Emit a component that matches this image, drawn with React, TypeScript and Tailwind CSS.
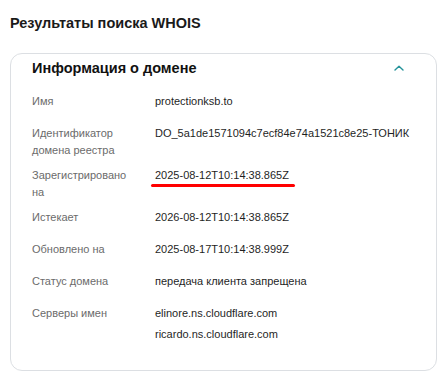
import React from "react";

type Row = {
  label: string;
  values: string[];
  marked?: boolean;
};

const rows: Row[] = [
  { label: "Имя", values: ["protectionksb.to"] },
  {
    label: "Идентификатор домена реестра",
    values: ["DO_5a1de1571094c7ecf84e74a1521c8e25-ТОНИК"],
  },
  { label: "Зарегистрировано на", values: ["2025-08-12T10:14:38.865Z"], marked: true },
  { label: "Истекает", values: ["2026-08-12T10:14:38.865Z"] },
  { label: "Обновлено на", values: ["2025-08-17T10:14:38.999Z"] },
  { label: "Статус домена", values: ["передача клиента запрещена"] },
  {
    label: "Серверы имен",
    values: ["elinore.ns.cloudflare.com", "ricardo.ns.cloudflare.com"],
  },
];

export default function App() {
  return (
    <div className="h-[374px] w-[444px] bg-white px-[10px] pt-[14px] font-['Liberation_Sans',Arial,sans-serif]">
      <h1 className="text-[14.5px] leading-[18px] font-bold text-[#1a1a1a]">
        Результаты поиска <span className="font-semibold">WHOIS</span>
      </h1>

      <div className="mt-[21px] h-[318px] w-[427px] rounded-[12px] border border-[#dcdfe3] px-[21px] pt-[4px]">
        <div className="flex h-[20px] items-center justify-between">
          <h2 className="text-[14.5px] leading-[20px] font-bold text-[#111]">
            Информация о домене
          </h2>
          <svg
            width="10"
            height="6"
            viewBox="0 0 10 6"
            fill="none"
            className="mr-[11px]"
          >
            <path
              d="M1 5L5 1.3L9 5"
              stroke="#24939a"
              strokeWidth="1.4"
              strokeLinecap="round"
              strokeLinejoin="round"
            />
          </svg>
        </div>

        <div className="mt-[15px] flex flex-col gap-[8px] text-[11px] leading-[17px]">
          {rows.map((row) => (
            <div key={row.label} className="flex min-h-[24px] items-start">
              <div className="w-[123px] shrink-0 pr-[24px] text-[#6b6b6b]">
                {row.label}
              </div>
              <div className="flex flex-col gap-[4px] text-[#1f1f1f]">
                {row.values.map((v) => (
                  <span key={v} className="relative">
                    {v}
                    {row.marked && (
                      <span className="absolute top-[17px] left-[-4px] h-[2.5px] w-[144px] rounded-full bg-[#ff0000]" />
                    )}
                  </span>
                ))}
              </div>
            </div>
          ))}
        </div>
      </div>
    </div>
  );
}
